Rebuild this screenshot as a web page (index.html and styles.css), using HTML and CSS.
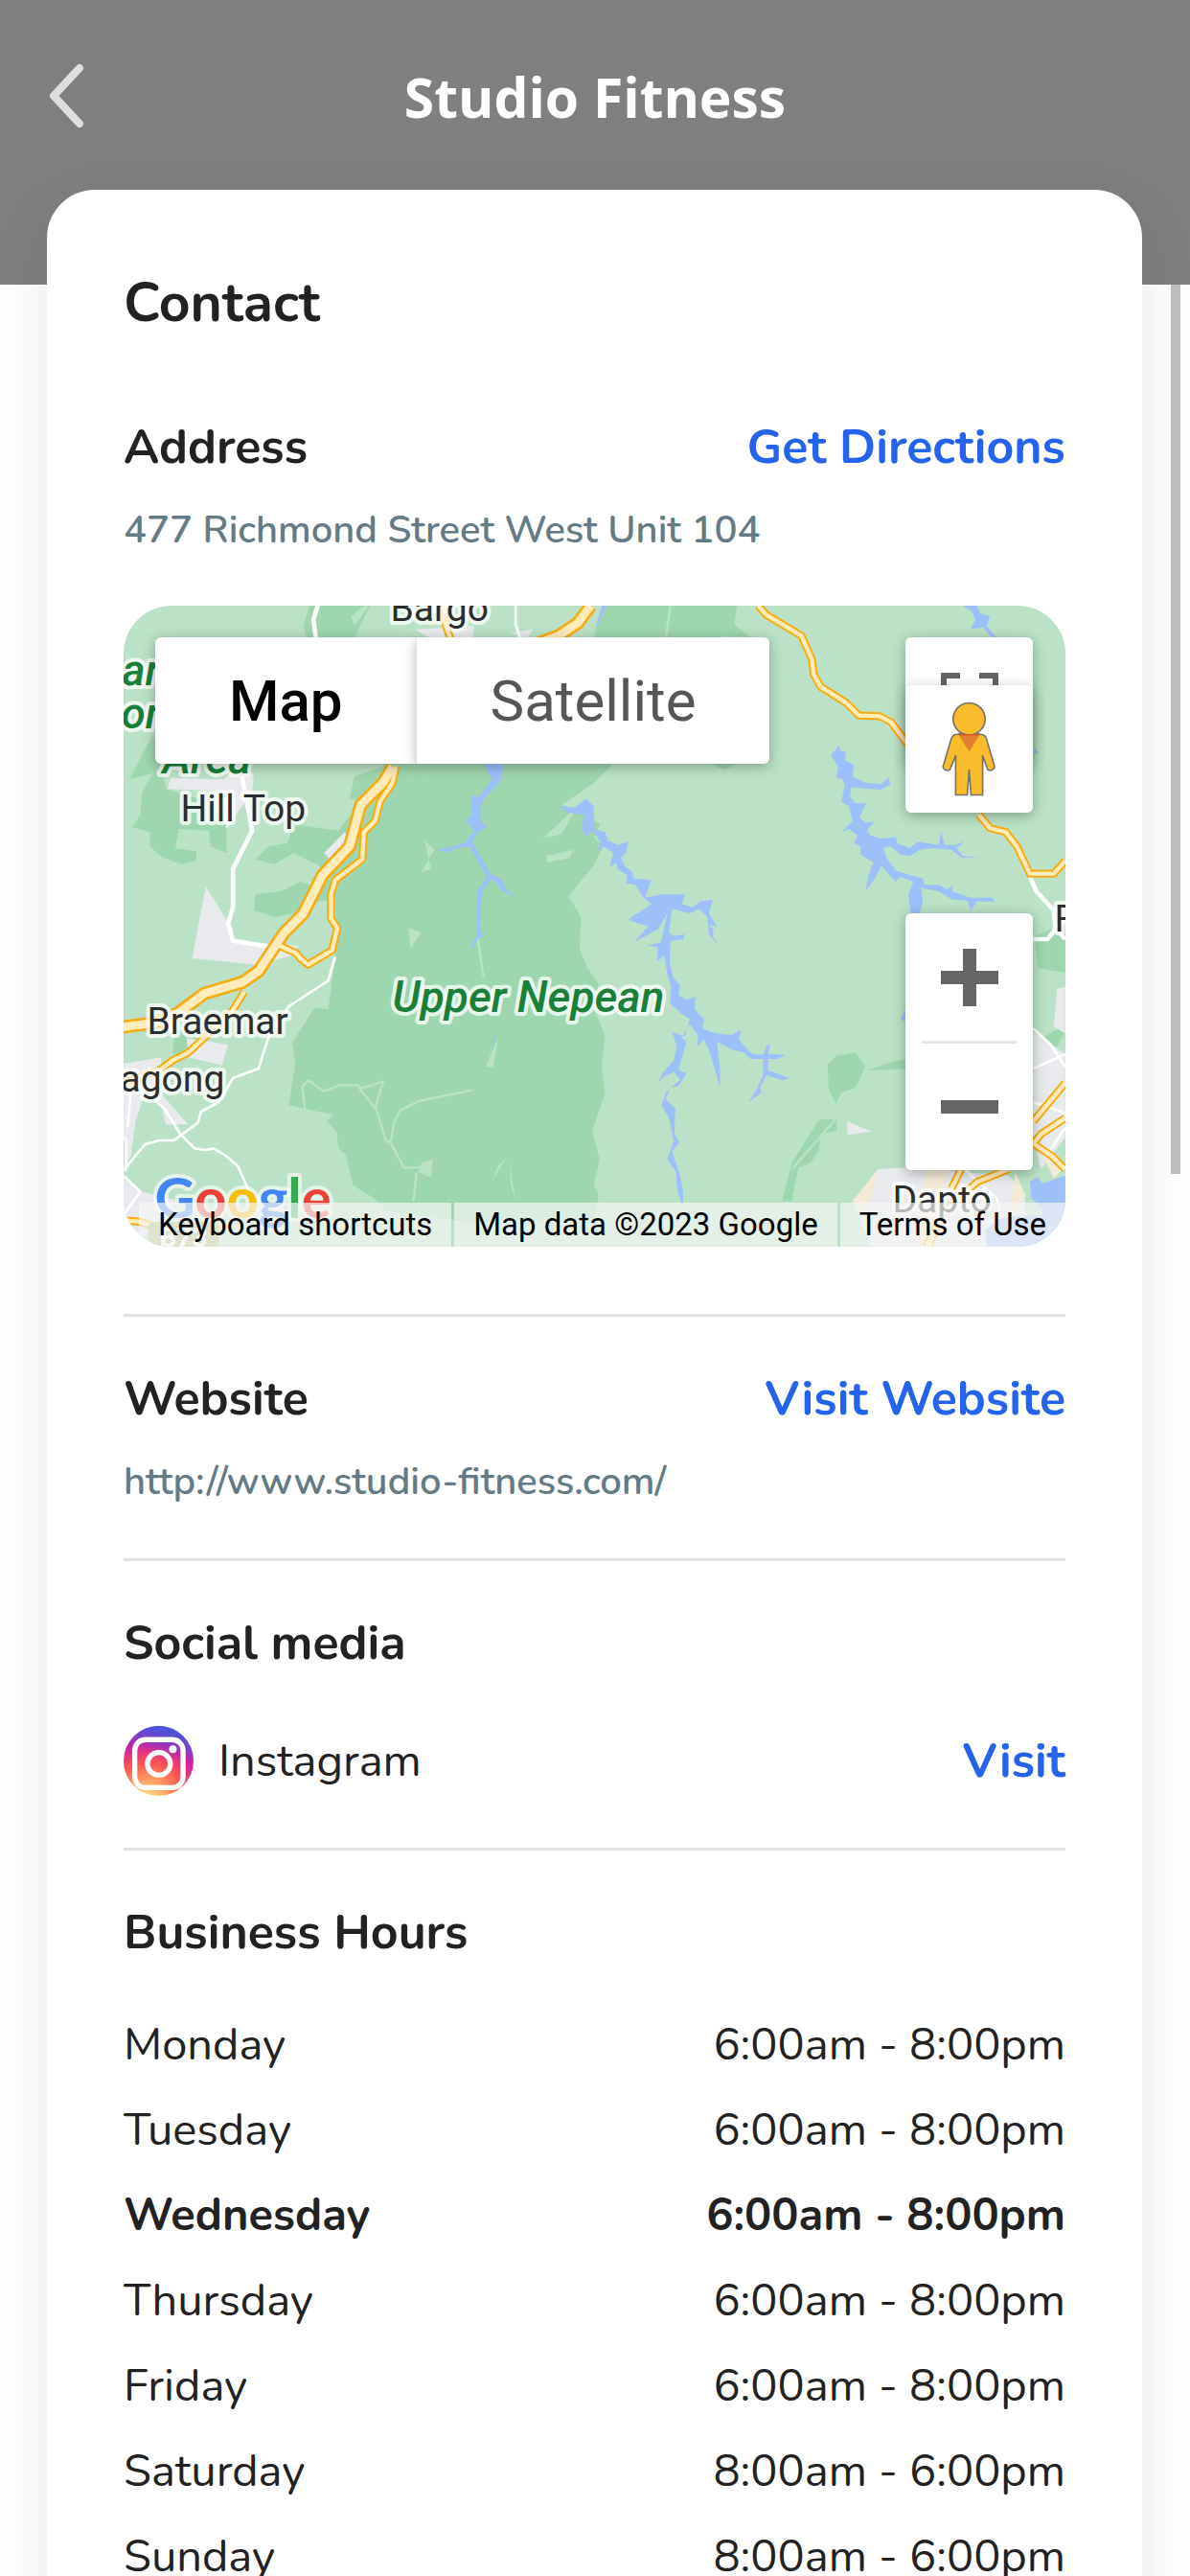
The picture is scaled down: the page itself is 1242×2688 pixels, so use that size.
FILE: index.html
```html
<!DOCTYPE html>
<html lang="en">
<head>
    <meta charset="utf-8">
    <meta name="viewport" content="width=device-width, initial-scale=1">
    <title>Studio Fitness</title>
    <link rel="stylesheet" href="styles.css">
</head>
<body>
    <div class="screen">
        <header class="header">
            <button class="back" aria-label="Back">
                <svg viewBox="0 0 38 68"><path d="M33 5 L6 34 L33 63"/></svg>
            </button>
            <h1>Studio Fitness</h1>
        </header>

        <main class="card">
            <h2>Contact</h2>

            <section class="section address">
                <div class="row">
                    <h3>Address</h3>
                    <a class="action" href="#directions">Get Directions</a>
                </div>
                <p class="detail">477 Richmond Street West Unit 104</p>

                <div class="map">
                    <svg class="map-canvas" viewBox="0 0 984 669" preserveAspectRatio="xMidYMid slice">
                        <rect width="984" height="669" fill="#bbe2c6"/>
                        <g transform="scale(0.33333) translate(-26 -36)">
                            <!-- forest -->
                            <g fill="#9ed7af">
                                <path d="M26 36H610L590 100 600 140H850L840 540 750 570 735 640 770 650 700 740 560 720 540 780 480 790 440 830 500 845 560 810 640 850 650 920 580 900 520 930 440 940 435 990 500 1010 560 1000 640 960H690V1140L668 1300 625 1295 555 1405 565 1470 545 1600 685 1630 665 1650 695 1685 700 1735 725 1755 745 1850 810 1890 850 1930 1100 1965 1300 1960 1500 1960 1515 1880 1500 1850 1518 1770 1495 1680 1535 1560 1525 1480 1535 1380 1500 1300 1515 1220 1480 1170 1455 1110 1460 1010 1420 945 1500 850 1530 790 1500 760 1520 720 1470 690 1400 660 1500 590 1550 540 1640 420 1900 130 1990 136 1940 95 1948 36H1530L1500 136H750L800 36Z"/>
                                <path d="M120 440L40 580 120 560 85 620 80 690 55 730 110 745 110 790 150 825 210 845 255 835 255 805 190 795 200 735 295 740 300 790 350 810 350 720 290 650 160 610 150 560Z"/>
                                <path d="M1860 530H1950L1910 550ZM2232 1470L2260 1445 2320 1435 2350 1480 2320 1545 2275 1560 2258 1595 2235 1550ZM2205 1645H2260V1680L2210 1690 2205 1740 2180 1780 2140 1795 2120 1900H2090L2120 1780ZM2360 1490L2430 1465 2480 1455V1485L2400 1490ZM2880 1070L2976 1030V1185L2890 1170ZM2976 1370L2940 1430 2900 1390 2976 1350ZM190 1360L260 1390 230 1430 180 1440Z"/>
                            </g>
                            <g fill="#bbe2c6">
                                <path d="M26 470L115 445 26 620ZM750 100L795 38 780 36 740 70ZM960 870L1000 800 970 770 990 860ZM920 1045L960 1060 925 1110ZM960 1780L995 1770 990 1825 950 1810ZM1225 1765L1180 1840 1200 1790ZM1235 1775L1255 1900 1240 1850ZM1350 820L1435 800 1425 825 1355 840ZM1200 1390L1185 1480 1160 1480ZM1340 765L1420 690 1450 660 1400 750Z"/>
                            </g>
                            <!-- built-up areas -->
                            <g fill="#e8eaed">
                                <path d="M175 575L340 580 360 560H435L430 620 380 690 350 735 330 650 310 615 165 610ZM940 110L1125 100 1120 140H990ZM1240 120L1310 110 1290 140ZM655 810L720 745 740 780 690 850ZM285 915L350 1020 370 1085 575 1100 560 1130 440 1160 242 1140ZM26 1470L145 1450 150 1570 230 1660H160L145 1600 95 1560 65 1650 50 1760 26 1800ZM225 1390L355 1410 335 1475 230 1450ZM26 1830L80 1870 200 1900 60 2042H26ZM2292 1650L2370 1683 2295 1692ZM2310 1900L2390 1800 2480 1795 2800 1820 2850 1880 2850 2042H2370ZM2876 1370L2976 1440V1700L2900 1800 2876 1690ZM2950 1235L2976 1230V1375L2940 1355Z"/>
                            </g>
                            <path fill="#f4ead8" d="M2540 1800L2620 1790 2580 1900 2560 2042H2500ZM2820 1810L2850 1880 2800 1960ZM2900 1740L2976 1790 2940 1830ZM2310 1900L2390 1800 2350 1960Z"/>

                            <!-- country roads -->
                            <g class="track">
                                <path d="M595 1610L587 1540 608 1522 652 1556 705 1537H760L775 1547 840 1525 815 1610 765 1545M815 1600L850 1715 865 1710 875 1650 895 1615 955 1586 1118 1553M860 1710L905 1795H960M945 1810L935 1900M1135 1070L1155 1200M1740 36L1725 140M2120 1800L2260 1640 2330 1540 2400 1490"/>
                            </g>
                            <g class="road">
                                <path class="road-wide" d="M635 36L622 80 630 140M398 570L430 740 370 860V980L355 1030 370 1085 490 1105"/>
                                <path d="M690 1135L668 1210 545 1290 480 1390 450 1485 370 1515 325 1590 270 1620 260 1655 185 1710H140L95 1722 30 1800M110 1570L155 1610 205 1690 250 1735 285 1740 310 1735 350 1760 385 1790 425 1880M26 1820L80 1870 30 1940M50 1560L40 1670M1255 36V95L1270 140"/>
                                <path class="road-wide" d="M2866 885L2885 930 2940 990 2945 1045 2976 1080M2876 1080H2920L2976 1010"/>
                                <path d="M2876 1360L2930 1410 2976 1480M2876 1485L2976 1440M2876 1590L2976 1625M2660 1800L2760 1890 2800 2042M2976 1670L2930 1740"/>
                            </g>

                            <!-- highways -->
                            <g class="highway-edge">
                                <path class="highway-main" d="M1490 36L1450 90 1390 130 1310 160M870 540L840 590 770 660 735 790 650 880 590 1000 530 1060 450 1180 400 1215 280 1250 200 1310 140 1340 26 1355"/>
                                <path d="M1030 36L1035 95 1055 150M880 540L870 590 830 650 815 710 780 745 775 830 690 895 677 940V1015L697 1045 680 1115 605 1160 580 1140 570 1125 515 1100M405 1245L365 1310 300 1370 230 1435 180 1460 140 1490 26 1530M26 1960L80 1965 140 1985"/>
                                <path d="M2015 36L2040 65 2150 130 2183 205 2188 250 2210 290 2290 340 2330 380 2395 382 2430 400 2490 480M2705 690L2740 732 2790 745 2825 790 2865 875H2940L2976 835"/>
                                <path d="M2976 1530L2876 1650M2976 1640L2900 1690 2876 1720 2935 1760 2976 1800M2650 1800L2620 1860M2800 1800L2700 1840 2600 1930 2540 2042M2570 1980L2550 2042"/>
                            </g>
                            <g class="highway">
                                <path class="highway-main" d="M1490 36L1450 90 1390 130 1310 160M870 540L840 590 770 660 735 790 650 880 590 1000 530 1060 450 1180 400 1215 280 1250 200 1310 140 1340 26 1355"/>
                                <path d="M1030 36L1035 95 1055 150M880 540L870 590 830 650 815 710 780 745 775 830 690 895 677 940V1015L697 1045 680 1115 605 1160 580 1140 570 1125 515 1100M405 1245L365 1310 300 1370 230 1435 180 1460 140 1490 26 1530M26 1960L80 1965 140 1985"/>
                                <path d="M2015 36L2040 65 2150 130 2183 205 2188 250 2210 290 2290 340 2330 380 2395 382 2430 400 2490 480M2705 690L2740 732 2790 745 2825 790 2865 875H2940L2976 835"/>
                                <path d="M2976 1530L2876 1650M2976 1640L2900 1690 2876 1720 2935 1760 2976 1800M2650 1800L2620 1860M2800 1800L2700 1840 2600 1930 2540 2042M2570 1980L2550 2042"/>
                            </g>

                            <!-- rivers and reservoirs -->
                            <g fill="#9dc0f9">
                                <path d="M1155 530H1218L1210 580 1185 610 1165 630 1145 660V710L1165 730 1135 745 1120 775 1175 875 1210 890 1225 925 1260 955 1215 930 1180 890 1150 930 1142 1040 1145 1060 1158 1070 1140 1075 1120 1110 1115 1105 1132 1070 1135 930 1165 885 1110 790 1070 795 1040 808 1008 800 1060 790 1100 775 1125 740 1098 710 1118 690 1115 630 1140 635 1180 580Z"/>
                                <path d="M1185 1385L1192 1380 1185 1428Z"/>
                                <path d="M1390 662L1440 668 1475 640 1500 665 1500 735 1535 745 1545 770 1575 785 1608 775 1600 810 1585 825 1595 850 1620 870 1625 890 1680 895 1660 950 1715 940 1785 940 1775 970 1810 980 1835 960 1872 958 1860 1000 1885 1040 1860 1035 1875 1050 1872 1070 1895 1105 1860 1065 1855 1010 1830 985 1800 1000 1745 985 1735 1060 1750 1070 1785 1065 1780 1080 1740 1085 1737 1150 1748 1200 1770 1225 1765 1255 1790 1270 1818 1260 1815 1300 1845 1330 1840 1360 1880 1375 1930 1380 1960 1365 1955 1395 1985 1430 2000 1440 2030 1442 2040 1415 2052 1408 2045 1440 2100 1442 2075 1455 2045 1455 2045 1490 2112 1515 2090 1522 2040 1505 2020 1545 2025 1560 1985 1590 2010 1550 2030 1505V1455L1990 1455 1970 1435 1930 1425 1885 1400 1895 1490V1545L1865 1440 1845 1395 1825 1415V1380L1800 1345 1775 1390 1790 1400 1770 1470 1765 1490 1790 1500 1765 1540 1740 1545 1725 1580 1755 1610 1752 1690 1768 1715 1745 1745 1770 1820 1780 1870 1778 1920 1760 1860 1758 1810 1730 1770 1750 1710 1735 1640 1712 1600 1725 1560 1770 1520 1750 1495 1720 1510 1700 1530 1715 1500 1750 1460 1760 1415 1745 1370 1785 1385 1800 1330 1770 1310 1738 1280 1742 1230 1730 1190 1720 1130 1698 1150 1700 1105 1665 1100 1710 1090 1730 1000 1700 1050 1625 1090 1670 1040 1610 1020 1680 1000 1605 1020 1680 970 1655 950 1630 910 1600 905 1605 880 1575 860 1570 840 1550 855 1560 810 1530 790 1512 805 1520 775 1495 740 1475 760 1460 735 1470 690 1420 685Z"/>
                                <path transform="translate(500 0)" d="M1742 505L1768 473 1772 490 1790 495 1785 520 1815 535 1810 570 1850 590 1900 595 1915 580 1922 573 1930 595 1900 612 1805 605 1802 635 1820 655 1852 655 1832 700 1850 715 1878 712 1855 740 1865 755 1900 765 1945 760 1950 780 1990 795 2015 775 2050 780 2080 785 2088 745 2098 785 2130 785 2160 775 2135 795 2155 820 2210 825 2150 825 2120 800 2060 795 2020 800 1990 820 1960 815 1930 790 1905 795 1920 830 1945 865 1990 880 2030 890 2035 910 2080 910 2105 925 2125 910 2120 930 2180 950 2250 950 2255 962 2200 962 2180 990 2170 960 2120 955 2080 930 2025 920 2030 960 2020 1000 1995 1030 1985 940 2000 900 1960 885 1945 900 1900 850 1880 890 1850 930 1860 880 1875 840 1835 815 1835 790 1815 780 1825 755 1800 735 1775 745 1810 710 1800 665 1775 650 1785 600 1780 580 1760 575 1765 540Z"/>
                                <path transform="translate(1000 0)" d="M1655 36H1700L1710 60 1740 70 1730 100 1765 140 1740 130 1720 105 1680 108 1695 80 1680 50Z"/>
                                <path d="M1525 36H1540L1505 110 1495 140ZM2880 480L2893 497 2878 500ZM2460 1330L2480 1290V1340ZM2865 1840L2890 1825 2905 1845 2976 1820V2042H2730L2725 1990 2780 1950 2900 1945 2910 1930 2870 1890Z"/>
                            </g>
                        </g>

                        <g class="place">
                            <text x="279" y="16">Bargo</text>
                            <text x="60" y="225">Hill Top</text>
                            <text x="25" y="447">Braemar</text>
                            <text x="-3" y="507">agong</text>
                            <text x="-6" y="587">l</text>
                            <text x="803" y="633">Dapto</text>
                            <text x="972" y="340">F</text>
                        </g>
                        <g class="park">
                            <text x="-1" y="83">ar</text>
                            <text x="-2" y="128">on</text>
                            <text x="41" y="175">Area</text>
                            <text x="281" y="424">Upper Nepean</text>
                        </g>
                        <rect x="26" y="643" width="74" height="40" rx="6" fill="#a9b978"/>
                        <text class="shield" x="38" y="669">B73</text>
                        <text class="google" x="33" y="639"><tspan fill="#4285f4">G</tspan><tspan fill="#ea4335">o</tspan><tspan fill="#fbbc05">o</tspan><tspan fill="#4285f4">g</tspan><tspan fill="#34a853">l</tspan><tspan fill="#ea4335">e</tspan></text>
                    </svg>

                    <div class="map-type">
                        <button class="type selected">Map</button>
                        <button class="type">Satellite</button>
                    </div>

                    <button class="control fullscreen" aria-label="Toggle fullscreen view">
                        <svg viewBox="0 0 60 60"><path d="M0 20V0H20V6H6V20ZM40 0H60V20H54V6H40ZM0 40V60H20V54H6V40ZM60 40V60H40V54H54V40Z"/></svg>
                    </button>
                    <button class="control pegman" aria-label="Street View">
                        <svg viewBox="0 0 174 304">
                            <g fill="#fbbc2c" stroke="#727272" stroke-width="5" stroke-linejoin="round">
                                <path d="M50 104C38 104 33 108 30 118L4 206C2 214 18 224 26 216L44 172V297H81L87 218 93 297H130V172L146 216C154 224 170 214 168 206L142 118C139 108 134 104 122 104L104 96H70Z"/>
                                <circle cx="87" cy="55" r="51"/>
                            </g>
                            <path fill="#e08030" d="M52 103H122L87 160Z"/>
                            <path fill="#d65b28" d="M52 103H122L119 108H55Z"/>
                        </svg>
                    </button>

                    <div class="zoom">
                        <button aria-label="Zoom in">
                            <svg viewBox="0 0 60 60"><path d="M23 0H37V23H60V37H37V60H23V37H0V23H23Z"/></svg>
                        </button>
                        <button aria-label="Zoom out">
                            <svg viewBox="0 0 60 60"><path d="M0 23H60V37H0Z"/></svg>
                        </button>
                    </div>

                    <div class="credits">
                        <button>Keyboard shortcuts</button>
                        <span>Map data ©2023 Google</span>
                        <a href="#terms">Terms of Use</a>
                    </div>
                </div>
            </section>

            <section class="section">
                <div class="row">
                    <h3>Website</h3>
                    <a class="action" href="#website">Visit Website</a>
                </div>
                <p class="detail">http://www.studio-fitness.com/</p>
            </section>

            <section class="section">
                <h3>Social media</h3>
                <div class="row social">
                    <svg class="instagram" viewBox="0 0 220 220">
                        <defs>
                            <radialGradient id="ig-warm" cx="0.35" cy="1.05" r="1.05">
                                <stop offset="0" stop-color="#ffe28a"/>
                                <stop offset="0.2" stop-color="#ffb36b"/>
                                <stop offset="0.5" stop-color="#fb5550"/>
                                <stop offset="0.75" stop-color="#d3209f"/>
                                <stop offset="1" stop-color="#8a3ac8"/>
                            </radialGradient>
                            <linearGradient id="ig-cool" x1="0.55" y1="0" x2="0.45" y2="0.4">
                                <stop offset="0" stop-color="#4455dd"/>
                                <stop offset="1" stop-color="#4455dd" stop-opacity="0"/>
                            </linearGradient>
                        </defs>
                        <circle cx="110" cy="110" r="110" fill="url(#ig-warm)"/>
                        <circle cx="110" cy="110" r="110" fill="url(#ig-cool)"/>
                        <g fill="none" stroke="#fff" stroke-width="16">
                            <rect x="35" y="43" width="152" height="151" rx="34"/>
                            <circle cx="111" cy="119" r="36"/>
                        </g>
                        <circle cx="155" cy="73" r="12" fill="#fff"/>
                    </svg>
                    <span class="network">Instagram</span>
                    <a class="action" href="#instagram">Visit</a>
                </div>
            </section>

            <section class="section">
                <h3>Business Hours</h3>
                <table class="hours">
                    <tr><th scope="row">Monday</th><td>6:00am - 8:00pm</td></tr>
                    <tr><th scope="row">Tuesday</th><td>6:00am - 8:00pm</td></tr>
                    <tr class="today"><th scope="row">Wednesday</th><td>6:00am - 8:00pm</td></tr>
                    <tr><th scope="row">Thursday</th><td>6:00am - 8:00pm</td></tr>
                    <tr><th scope="row">Friday</th><td>6:00am - 8:00pm</td></tr>
                    <tr><th scope="row">Saturday</th><td>8:00am - 6:00pm</td></tr>
                    <tr><th scope="row">Sunday</th><td>8:00am - 6:00pm</td></tr>
                </table>
            </section>
        </main>

        <div class="scroll-thumb"></div>
    </div>
</body>
</html>
```
FILE: styles.css
```css
* {
    box-sizing: border-box;
}
body {
    margin: 0;
    background-color: #fff;
    color: #222;
    font-family: 'Nunito', 'Noto Sans', sans-serif;
}
h1, h2, h3, p {
    margin: 0;
}
button {
    padding: 0;
    border: none;
    background: none;
    color: inherit;
    font: inherit;
    cursor: pointer;
}
a {
    color: inherit;
    text-decoration: none;
}
svg {
    display: block;
}
.screen {
    position: relative;
    height: 100vh;
    overflow: hidden;
}

/* header */
.header {
    display: grid;
    grid-template-columns: 38px 1fr 38px;
    align-items: start;
    height: 297px;
    padding: 66px 50px 0;
    background-color: #7f7f7f;
}
.back svg {
    width: 38px;
    height: 68px;
    fill: none;
    stroke: #dedede;
    stroke-width: 8;
    stroke-linecap: round;
    stroke-linejoin: round;
}
.header h1 {
    color: #fff;
    font-family: 'Open Sans', sans-serif;
    font-size: 57px;
    font-weight: 700;
    line-height: 70px;
    text-align: center;
}

/* card */
.card {
    position: relative;
    margin: -99px 50px 0 49px;
    padding: 80px;
    border-radius: 50px 50px 0 0;
    background-color: #fff;
    box-shadow: 0 24px 60px rgba(40, 40, 80, 0.1);
}
.card h2 {
    font-size: 57px;
    font-weight: 700;
    line-height: 76px;
}
.card h3, .action {
    font-size: 50px;
    font-weight: 700;
    line-height: 64px;
}
.action {
    color: #2463eb;
}
.row {
    display: flex;
    justify-content: space-between;
    align-items: center;
}
.detail {
    margin-top: 28px;
    color: #647a84;
    font-size: 40px;
    font-weight: 600;
    line-height: 52px;
}
.section {
    padding: 54px 0;
    border-top: 3px solid #e0e0e0;
}
.address {
    padding: 81px 0 70px;
    border-top: none;
}

/* map */
.map {
    position: relative;
    height: 669px;
    margin-top: 53px;
    border-radius: 50px;
    overflow: hidden;
    font-family: 'Roboto', sans-serif;
}
.map-canvas {
    width: 100%;
    height: 100%;
}
.road, .track {
    fill: none;
    stroke: #fff;
    stroke-width: 8;
    stroke-linejoin: round;
}
.track {
    stroke: #bbe2c6;
    stroke-width: 7;
}
.road-wide {
    stroke-width: 14;
}
.highway-edge, .highway {
    fill: none;
    stroke: #f9ab13;
    stroke-width: 25;
    stroke-linejoin: round;
}
.highway {
    stroke: #ffecb8;
    stroke-width: 13;
}
.highway-edge .highway-main {
    stroke-width: 42;
}
.highway .highway-main {
    stroke-width: 26;
}
.place, .park {
    fill: #2b2e31;
    stroke: #fff;
    stroke-opacity: 0.75;
    stroke-width: 8;
    stroke-linejoin: round;
    paint-order: stroke;
    font-size: 39px;
}
.park {
    fill: #188038;
    font-size: 46px;
    font-style: italic;
    font-weight: 500;
}
.shield {
    fill: #fff;
    font-size: 28px;
    font-weight: 700;
}
.google {
    stroke: #fff;
    stroke-opacity: 0.6;
    stroke-width: 8;
    stroke-linejoin: round;
    paint-order: stroke;
    font-family: 'Lato', sans-serif;
    font-size: 58px;
    font-weight: 700;
}
.map-type {
    position: absolute;
    top: 33px;
    left: 33px;
    display: flex;
}
.type {
    height: 132px;
    padding: 0 77px;
    border-radius: 0 6px 6px 0;
    background-color: #fff;
    box-shadow: 0 3px 14px rgba(0, 0, 0, 0.3);
    color: #565656;
    font-size: 60px;
}
.type.selected {
    border-radius: 6px 0 0 6px;
    color: #000;
    font-weight: 500;
}
.control, .zoom {
    position: absolute;
    right: 34px;
    width: 133px;
    border-radius: 6px;
    background-color: #fff;
    box-shadow: 0 3px 14px rgba(0, 0, 0, 0.3);
}
.control {
    display: grid;
    place-items: center;
    height: 133px;
}
.fullscreen {
    top: 33px;
}
.pegman {
    top: 83px;
}
.fullscreen svg, .zoom svg {
    width: 60px;
    height: 60px;
    fill: #666;
}
.pegman svg {
    width: 57px;
    height: 100px;
}
.zoom {
    top: 321px;
    display: grid;
    padding: 0 17px;
}
.zoom button {
    display: grid;
    place-items: center;
    height: 133px;
}
.zoom button + button {
    height: 135px;
    border-top: 3px solid #e6e6e6;
}
.credits {
    position: absolute;
    right: 0;
    bottom: 0;
    left: 16px;
    display: flex;
    gap: 3px;
    color: #000;
    font-size: 33px;
    line-height: 46px;
}
.credits > * {
    padding: 0 20px;
    background-color: rgba(245, 245, 245, 0.7);
    white-space: nowrap;
}
.credits a {
    flex: 1;
}

/* social media */
.social {
    gap: 26px;
    margin-top: 54px;
}
.social .action {
    margin-left: auto;
}
.instagram {
    width: 73px;
    height: 73px;
}
.network {
    font-size: 47px;
}

/* business hours */
.hours {
    width: 100%;
    margin-top: 40px;
    border-collapse: collapse;
    font-size: 47px;
    line-height: 89px;
}
.hours th, .hours td {
    padding: 0;
    font-weight: 400;
    text-align: left;
}
.hours td {
    text-align: right;
}
.hours .today > * {
    font-weight: 700;
}

.scroll-thumb {
    position: absolute;
    top: 297px;
    right: 10px;
    width: 10px;
    height: 928px;
    background-color: #bdbdbd;
}
```
